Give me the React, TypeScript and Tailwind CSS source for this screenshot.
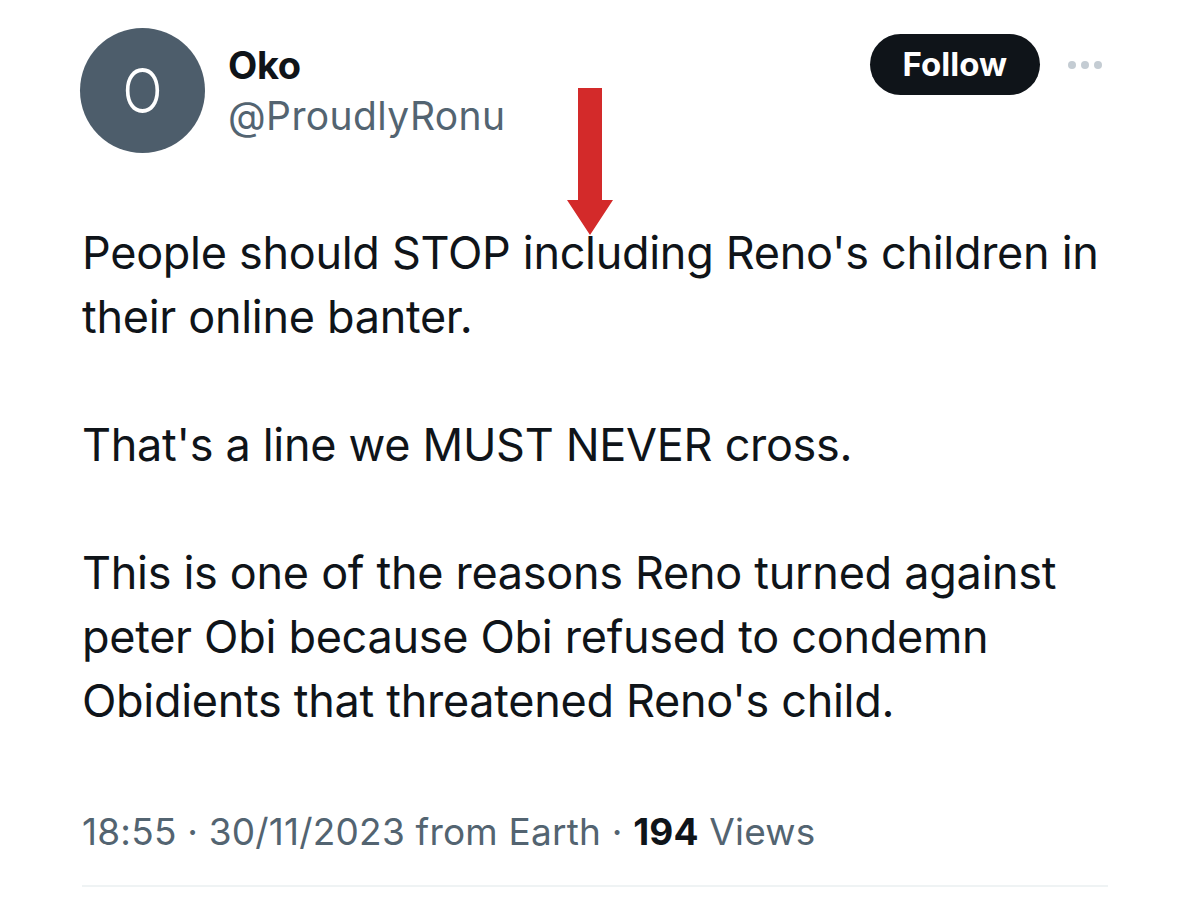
import React from 'react';

function Arrow() {
  return (
    <svg width="48" height="150" viewBox="0 0 48 150" className="absolute left-[566px] top-[86px]">
      <path d="M12 2 H36 V114 H47 L24 149 L1 114 H12 Z" fill="#d32a2a" />
    </svg>
  );
}

export default function App() {
  return (
    <div
      className="relative w-[1200px] h-[897px] bg-white overflow-hidden text-[#0f1419]"
      style={{ fontFamily: 'Inter, "Noto Sans", sans-serif' }}
    >
      <div className="pl-[80px] pr-[98px] pt-[28px]">
        <div className="flex items-start">
          <div className="w-[125px] h-[125px] rounded-full bg-[#4d5d6b] flex items-center justify-center shrink-0">
            <span className="text-white text-[62px] font-light leading-none scale-x-[0.85]">O</span>
          </div>
          <div className="ml-[23px] pt-[16px] flex-1">
            <div className="text-[38px] font-bold leading-[42px] tracking-[-0.3px]">Oko</div>
            <div className="mt-[6px] text-[39px] leading-[48px] text-[#536471] tracking-[0.4px]">@ProudlyRonu</div>
          </div>
          <div className="flex items-center mt-[6px]">
            <div className="h-[61px] px-[33px] rounded-full bg-[#0f1419] text-white text-[33px] font-bold flex items-center">
              Follow
            </div>
            <div className="flex gap-[5px] ml-[28px]">
              <span className="w-[8px] h-[8px] rounded-full bg-[#c4ccd3]" />
              <span className="w-[8px] h-[8px] rounded-full bg-[#c4ccd3]" />
              <span className="w-[8px] h-[8px] rounded-full bg-[#c4ccd3]" />
            </div>
          </div>
        </div>

        <div className="pl-[2px] -mr-[60px] mt-[68px] text-[45px] leading-[64px] tracking-[-0.3px] whitespace-nowrap">
          <p>
            People should STOP including Reno's children in
            <br />
            their online banter.
          </p>
          <p className="mt-[64px]">That's a line we MUST NEVER cross.</p>
          <p className="mt-[64px]">
            This is one of the reasons Reno turned against
            <br />
            peter Obi because Obi refused to condemn
            <br />
            Obidients that threatened Reno's child.
          </p>
        </div>

        <div className="pl-[2px] mt-[76px] text-[37px] leading-[46px] text-[#536471] tracking-[0.2px]">
          18:55 · 30/11/2023 from Earth · <span className="font-bold text-[#0f1419]">194</span> Views
        </div>
        <div className="ml-[2px] mt-[30px] h-[2px] bg-[#eff3f4] w-[1026px]" />
      </div>
      <Arrow />
    </div>
  );
}
